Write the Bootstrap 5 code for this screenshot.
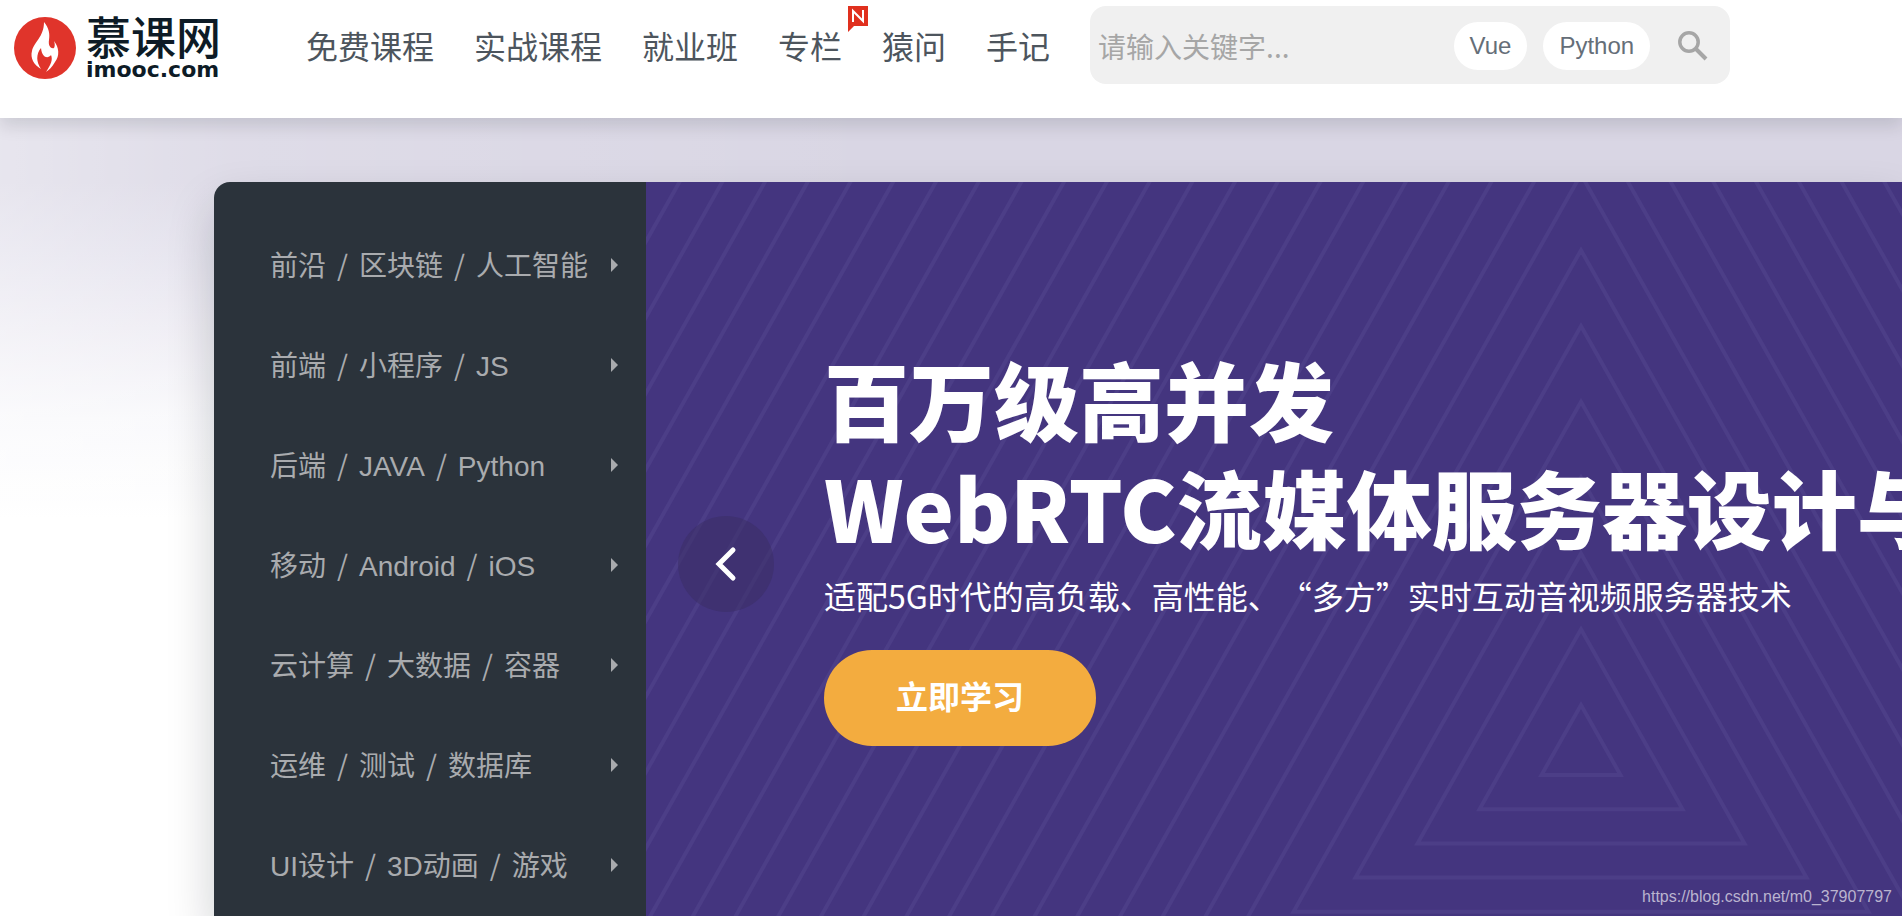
<!DOCTYPE html>
<html lang="zh-CN">
<head>
<meta charset="utf-8">
<meta name="viewport" content="width=device-width, initial-scale=1">
<title>慕课网</title>
<link href="https://cdn.jsdelivr.net/npm/bootstrap@5.3.0/dist/css/bootstrap.min.css" rel="stylesheet">
<style>
  body { font-family: "Liberation Sans", "Noto Sans CJK SC", sans-serif; background: #fff; overflow-x: hidden; }
  a { text-decoration: none; }
  .cjk { font-family: "Noto Sans CJK SC", sans-serif; }

  .site-header { padding: 6px 14px 34px; box-shadow: 0 8px 16px rgba(7, 17, 27, .12); z-index: 2; }
  .brand { gap: 10px; width: 292px; padding-top: 6px; color: #0d1b26; }
  .brand-name { font-size: 45px; line-height: 44px; font-weight: 500; }
  .brand-host { font-family: "DejaVu Sans", sans-serif; font-size: 22px; line-height: 24px; font-weight: 700; }
  .main-nav { gap: 40px; }
  .main-nav .nav-link { font-size: 32px; line-height: 48px; color: #4d555d; white-space: nowrap; }
  .flag-new { left: 100%; top: -15px; margin-left: 6px; }
  .search-box { width: 640px; height: 78px; margin-left: 40px; padding: 2px 14px 0 8px; background: #f0f0f0; border-radius: 16px; gap: 16px; }
  .search-box input { font-size: 28px; line-height: 40px; color: #4d555d; min-width: 0; }
  .search-box input::placeholder { color: #a6a6a6; opacity: 1; }
  .hot-word { font-size: 24px; line-height: 48px; padding: 0 16px; color: #656e78; background: #fff; }
  .search-btn { margin-left: 4px; width: 46px; height: 48px; }

  .stage { padding: 64px 0 0 214px;
    background:
      linear-gradient(to right, rgba(255,255,255,.38), rgba(255,255,255,.15) 240px, rgba(255,255,255,0) 900px),
      linear-gradient(to bottom, #d9d6e4, #d9d6e4 64px, #e2e0ec 140px, #eceaf2 210px, #f8f8fb 300px, #fff 400px); }
  .hero { border-radius: 16px 0 0 0; box-shadow: 0 24px 48px rgba(7, 17, 27, .2); }
  .cat-menu { width: 432px; padding: 33px 0 1px; background: #2b333b; border-radius: 16px 0 0 0; }
  .cat-menu a { height: 100px; padding: 0 28px 0 56px; font-size: 28px; line-height: 40px; color: #a9abae; }
  .cat-menu i { font-family: "Noto Sans CJK SC", sans-serif; font-style: normal; margin: 0 11px; }
  .banner { min-width: 0; background: #44357f; padding: 162px 0 0 178px; color: #fff; }
  .banner h1 { font-size: 85px; line-height: 108px; font-weight: 900; white-space: nowrap; }
  .banner p { font-size: 32px; line-height: 48px; margin: 11px 0 31px; white-space: nowrap; text-spacing-trim: space-all; }
  .rings { stroke: #4c3e87; stroke-width: 4; fill: none; }
  .learn-btn { font-size: 32px; line-height: 48px; padding: 21px 72px 27px; background: #f3ac3f; }
  .prev-btn { left: 32px; top: 334px; width: 96px; height: 96px; background: rgba(58, 46, 100, .5); }
  .source-url { right: 10px; bottom: 7px; font-family: "Liberation Sans", sans-serif; font-size: 16px; line-height: 24px; color: #bab4cf; }
</style>
</head>
<body>
<header class="site-header d-flex align-items-center bg-white position-relative">
  <a href="#" class="brand d-flex align-items-center flex-shrink-0">
    <svg width="62" height="62" viewBox="0 0 62 62" aria-hidden="true">
      <circle cx="31" cy="31" r="31" fill="#e0342b"/>
      <path fill="#fff" d="M30 5C35 11 36 17 35 23C34 29 37 32 40 31C41 29 41 27 40 24C45 30 46 39 41 45C38 50 35 53 32 55C37 47 39 43 37 38C34 42 28 41 27 31C22 37 22 45 27 52C20 48 16 41 18 34C20 25 30 20 30 5Z"/>
    </svg>
    <span class="d-flex flex-column">
      <span class="brand-name cjk">慕课网</span>
      <span class="brand-host">imooc.com</span>
    </span>
  </a>
  <nav class="main-nav nav flex-nowrap cjk">
    <a class="nav-link p-0" href="#">免费课程</a>
    <a class="nav-link p-0" href="#">实战课程</a>
    <a class="nav-link p-0" href="#">就业班</a>
    <a class="nav-link p-0 position-relative" href="#">专栏
      <svg class="flag-new position-absolute" width="20" height="26" viewBox="0 0 20 26" aria-hidden="true">
        <path fill="#e0301e" d="M0 0H20V20H6L0 26Z"/>
        <path fill="none" stroke="#fff" stroke-width="2" d="M5 16V5L15 15V4"/>
      </svg>
    </a>
    <a class="nav-link p-0" href="#">猿问</a>
    <a class="nav-link p-0" href="#">手记</a>
  </nav>
  <form class="search-box d-flex align-items-center" role="search">
    <input class="cjk flex-grow-1 border-0 bg-transparent p-0" type="text" placeholder="请输入关键字..." aria-label="请输入关键字">
    <a class="hot-word rounded-pill" href="#">Vue</a>
    <a class="hot-word rounded-pill" href="#">Python</a>
    <button class="search-btn btn border-0 p-0 d-flex align-items-center justify-content-center" type="button" aria-label="搜索">
      <svg width="30" height="30" viewBox="0 0 30 30" fill="none" stroke="#a6a6a6" aria-hidden="true">
        <circle cx="11" cy="11" r="9.200" stroke-width="3.500"/><path d="M18 18L28 28" stroke-width="4"/>
      </svg>
    </button>
  </form>
</header>

<main class="stage overflow-hidden">
  <div class="hero d-flex position-relative">
    <nav class="cat-menu flex-shrink-0" aria-label="课程分类">
      <a href="#" class="d-flex align-items-center justify-content-between"><span>前沿<i>/</i>区块链<i>/</i>人工智能</span><svg width="7" height="14" viewBox="0 0 7 14" fill="#a9abae"><path d="M0 0L7 7L0 14Z"/></svg></a>
      <a href="#" class="d-flex align-items-center justify-content-between"><span>前端<i>/</i>小程序<i>/</i>JS</span><svg width="7" height="14" viewBox="0 0 7 14" fill="#a9abae"><path d="M0 0L7 7L0 14Z"/></svg></a>
      <a href="#" class="d-flex align-items-center justify-content-between"><span>后端<i>/</i>JAVA<i>/</i>Python</span><svg width="7" height="14" viewBox="0 0 7 14" fill="#a9abae"><path d="M0 0L7 7L0 14Z"/></svg></a>
      <a href="#" class="d-flex align-items-center justify-content-between"><span>移动<i>/</i>Android<i>/</i>iOS</span><svg width="7" height="14" viewBox="0 0 7 14" fill="#a9abae"><path d="M0 0L7 7L0 14Z"/></svg></a>
      <a href="#" class="d-flex align-items-center justify-content-between"><span>云计算<i>/</i>大数据<i>/</i>容器</span><svg width="7" height="14" viewBox="0 0 7 14" fill="#a9abae"><path d="M0 0L7 7L0 14Z"/></svg></a>
      <a href="#" class="d-flex align-items-center justify-content-between"><span>运维<i>/</i>测试<i>/</i>数据库</span><svg width="7" height="14" viewBox="0 0 7 14" fill="#a9abae"><path d="M0 0L7 7L0 14Z"/></svg></a>
      <a href="#" class="d-flex align-items-center justify-content-between"><span>UI设计<i>/</i>3D动画<i>/</i>游戏</span><svg width="7" height="14" viewBox="0 0 7 14" fill="#a9abae"><path d="M0 0L7 7L0 14Z"/></svg></a>
    </nav>
    <section class="banner cjk flex-grow-1 position-relative overflow-hidden">
      <svg class="rings position-absolute top-0 start-0 w-100 h-100" aria-hidden="true"><path id="rings"/></svg>
      <div class="position-relative">
        <h1 class="m-0">百万级高并发<br>WebRTC流媒体服务器设计与</h1>
        <p>适配5G时代的高负载、高性能、“多方”实时互动音视频服务器技术</p>
        <button type="button" class="learn-btn btn border-0 rounded-pill text-white fw-bold">立即学习</button>
      </div>
      <button type="button" class="prev-btn btn border-0 rounded-circle p-0 position-absolute d-flex align-items-center justify-content-center" aria-label="上一张">
        <svg width="22" height="36" viewBox="0 0 22 36" fill="none" stroke="#fff" stroke-width="5" stroke-linecap="round" aria-hidden="true"><path d="M18 4L4 18L18 32"/></svg>
      </button>
      <a class="source-url position-absolute" href="#">https://blog.csdn.net/m0_37907797</a>
    </section>
  </div>
</main>
<script src="https://cdn.jsdelivr.net/npm/bootstrap@5.3.0/dist/js/bootstrap.bundle.min.js"></script>
<script>
  // Nested triangles around one centre, each a step larger than the last.
  let d = '';
  for (let k = 0; k < 34; k++) {
    const half = 39.5 + 62 * k, top = 523 - 75.8 * k, base = 593 + 34.2 * k;
    d += `M935 ${top}L${935 + half} ${base}H${935 - half}Z`;
  }
  document.getElementById('rings').setAttribute('d', d);
</script>
</body>
</html>
